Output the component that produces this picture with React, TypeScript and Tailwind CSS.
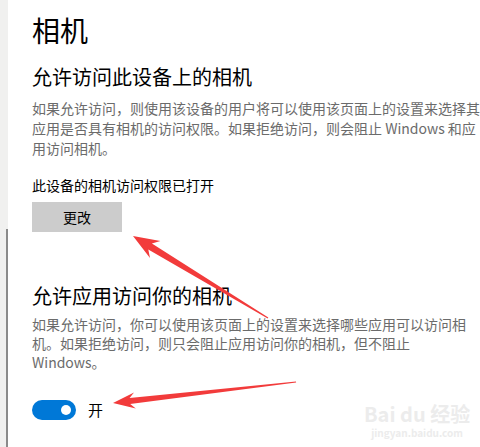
import React from 'react';

const font = { fontFamily: '"Noto Sans CJK SC", "Noto Sans", sans-serif' };

const Arrows: React.FC = () => (
  <svg className="absolute inset-0 pointer-events-none" width="480" height="447" viewBox="0 0 480 447">
    {/* arrow pointing at the change button */}
    <polygon
      fill="#f23b3b"
      points="133,236 160.4,241 151.9,243.4 268.3,317.6 267.7,318.4 148.3,249.4 150,258"
    />
    {/* arrow pointing at the toggle */}
    <polygon
      fill="#f23b3b"
      points="113,403 134,392.6 129.6,398.1 296,381.5 296.1,382.5 130.2,404.1 135.8,408.4"
    />
  </svg>
);

export default function App() {
  return (
    <div className="relative flex w-[480px] h-[447px] overflow-hidden bg-white" style={font}>
      {/* left edge with scrollbar */}
      <div className="flex flex-col w-[10px] bg-[#f0f0ef] pt-[229px]">
        <div className="flex-1 w-[2px] ml-[6px] bg-[#8a8a8a]" />
      </div>

      <div className="flex flex-col pl-[24px]">
        <h1 className="mt-[12px] text-[28px] leading-[36px] text-black">相机</h1>

        <h2 className="mt-[15px] text-[20px] leading-[28px] text-black">允许访问此设备上的相机</h2>
        <div className="mt-[7px] text-[14px] leading-[20px] text-[#6b6b6b] whitespace-nowrap">
          <div>如果允许访问，则使用该设备的用户将可以使用该页面上的设置来选择其</div>
          <div>应用是否具有相机的访问权限。如果拒绝访问，则会阻止 Windows 和应</div>
          <div>用访问相机。</div>
        </div>

        <div className="mt-[17px] text-[14px] leading-[20px] text-black">此设备的相机访问权限已打开</div>
        <button className="mt-[7px] w-[90px] h-[30px] bg-[#cccccc] text-[14px] text-black">更改</button>

        <h2 className="mt-[50px] text-[20px] leading-[28px] text-black">允许应用访问你的相机</h2>
        <div className="mt-[5px] text-[14px] leading-[19px] text-[#6b6b6b] whitespace-nowrap">
          <div>如果允许访问，你可以使用该页面上的设置来选择哪些应用可以访问相</div>
          <div>机。如果拒绝访问，则只会阻止应用访问你的相机，但不阻止</div>
          <div>Windows。</div>
        </div>

        <div className="mt-[28px] flex items-center">
          <div className="flex items-center justify-end w-[44px] h-[20px] rounded-full bg-[#0078d7] pr-[5px]">
            <div className="w-[10px] h-[10px] rounded-full bg-white" />
          </div>
          <span className="ml-[12px] text-[15px] leading-[20px] text-black">开</span>
        </div>
      </div>

      {/* watermark */}
      <div className="absolute left-[364px] top-[402px] flex flex-col items-center whitespace-nowrap text-[#ececec]">
        <div className="text-[20px] leading-[24px] font-bold">Bai du 经验</div>
        <div className="text-[10px] leading-[14px] font-bold">jingyan.baidu.com</div>
      </div>

      <Arrows />
    </div>
  );
}
